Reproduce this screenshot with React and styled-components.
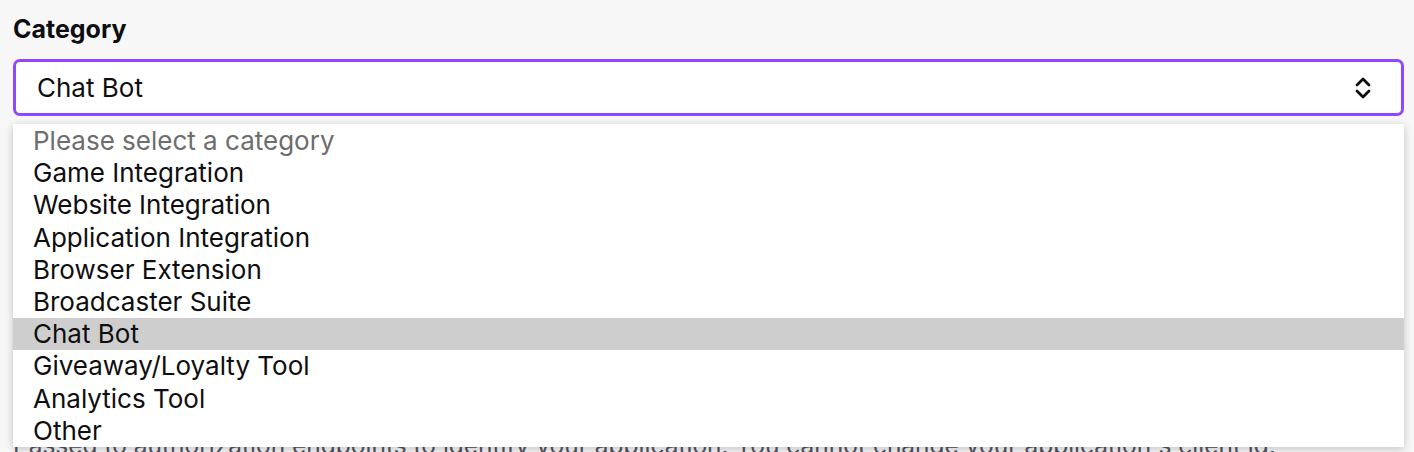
import styled, { createGlobalStyle } from 'styled-components'

const GlobalStyle = createGlobalStyle`
  html, body {
    margin: 0;
    padding: 0;
    background: #f7f7f8;
    font-family: Inter, "Noto Sans", sans-serif;
    color: #0e0e10;
    overflow: hidden;
  }
`

const Page = styled.div`
  position: relative;
  padding: 12px 10px 0 13px;
  height: 452px;
  box-sizing: border-box;
`

const Label = styled.div`
  font-size: 25px;
  font-weight: 700;
  line-height: 34px;
  margin-bottom: 13px;
`

const SelectBox = styled.div`
  display: flex;
  align-items: center;
  justify-content: space-between;
  width: 1391px;
  height: 57px;
  box-sizing: border-box;
  background: #fff;
  border: 3px solid #9147ff;
  border-radius: 7px;
  padding: 0 29px 0 21px;
  font-size: 26px;
`

const Help = styled.p`
  margin: 314px 0 0;
  font-size: 24.5px;
  color: #53535f;
  white-space: nowrap;
`

const Menu = styled.ul`
  position: absolute;
  top: 124px;
  left: 13px;
  width: 1391px;
  margin: 0;
  padding: 1px 0 0;
  list-style: none;
  background: #fff;
  box-shadow: 0 2px 8px rgba(0, 0, 0, 0.22);
`

const Option = styled.li`
  height: 32.2px;
  line-height: 32px;
  padding-left: 20px;
  font-size: 26px;
  color: ${p => (p.$placeholder ? '#6d6d6d' : '#0e0e10')};
  background: ${p => (p.$active ? '#cecece' : 'transparent')};
`

const options = [
  'Game Integration',
  'Website Integration',
  'Application Integration',
  'Browser Extension',
  'Broadcaster Suite',
  'Chat Bot',
  'Giveaway/Loyalty Tool',
  'Analytics Tool',
  'Other',
]

const Chevrons = () => (
  <svg width="18" height="24" viewBox="0 0 18 24" fill="none" stroke="#0e0e10" strokeWidth="2.8" strokeLinecap="round" strokeLinejoin="round">
    <polyline points="3,9 9,3 15,9" />
    <polyline points="3,15 9,21 15,15" />
  </svg>
)

const App = () => {
  const selected = 'Chat Bot'
  return (
    <Page>
      <GlobalStyle />
      <Label>Category</Label>
      <SelectBox>
        <span>{selected}</span>
        <Chevrons />
      </SelectBox>
      <Help>
        Passed to authorization endpoints to identify your application. You cannot change your application's client id.
      </Help>
      <Menu>
        <Option $placeholder>Please select a category</Option>
        {options.map(o => (
          <Option key={o} $active={o === selected}>
            {o}
          </Option>
        ))}
      </Menu>
    </Page>
  )
}

export default App
